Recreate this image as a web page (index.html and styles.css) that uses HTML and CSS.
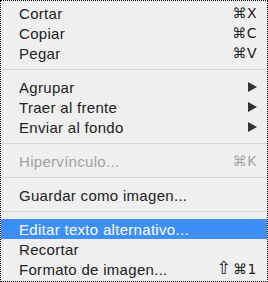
FILE: index.html
```html
<!DOCTYPE html>
<html lang="es">
  <head>
    <meta charset="UTF-8" />
    <meta name="viewport" content="width=device-width, initial-scale=1.0" />
    <title>menu</title>
    <link rel="stylesheet" href="styles.css">
  </head>
  <body>
    <div class="menu">
      <div class="item"><span>Cortar</span><span class="key">⌘X</span></div>
      <div class="item"><span>Copiar</span><span class="key">⌘C</span></div>
      <div class="item"><span>Pegar</span><span class="key">⌘V</span></div>
      <div class="sep"></div>
      <div class="item"><span>Agrupar</span><span class="arrow"></span></div>
      <div class="item"><span>Traer al frente</span><span class="arrow"></span></div>
      <div class="item"><span>Enviar al fondo</span><span class="arrow"></span></div>
      <div class="sep"></div>
      <div class="item disabled"><span>Hipervínculo...</span><span class="key">⌘K</span></div>
      <div class="sep"></div>
      <div class="item"><span>Guardar como imagen...</span></div>
      <div class="sep"></div>
      <div class="item active"><span>Editar texto alternativo...</span></div>
      <div class="item"><span>Recortar</span></div>
      <div class="item"><span>Formato de imagen...</span><span class="key"><span class="shift">⇧</span>⌘1</span></div>
    </div>
  </body>
</html>
```

FILE: styles.css
```css
body {
  margin: 0;
  font-family: "Liberation Sans", "DejaVu Sans", sans-serif;
  font-size: 15px;
  letter-spacing: 0.3px;
  color: #222;
}

.menu {
  box-sizing: border-box;
  width: 268px;
  height: 282px;
  border: 1px dotted #000;
  background-color: #efefef;
  padding-top: 2px;
}

.item {
  display: flex;
  justify-content: space-between;
  align-items: center;
  height: 20px;
  padding: 0 10px 0 18px;
}

.key {
  font-family: "DejaVu Sans", sans-serif;
  font-size: 14px;
  letter-spacing: 0.5px;
}

.shift {
  font-size: 18px;
  line-height: 14px;
  margin-right: 1px;
}

.arrow {
  width: 0;
  height: 0;
  border-top: 5px solid transparent;
  border-bottom: 5px solid transparent;
  border-left: 9px solid #333;
}

.disabled {
  color: #a3a3a3;
}

.active {
  background-color: #3d8ef6;
  color: #fff;
}

.sep {
  height: 1px;
  background-color: #d6d6d6;
  margin: 6px 0 7px;
}
```
